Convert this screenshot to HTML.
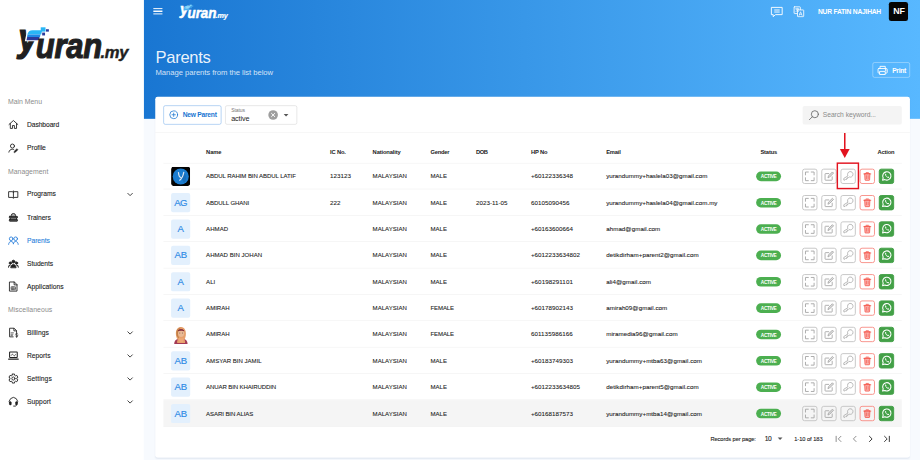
<!DOCTYPE html>
<html lang="en"><head><meta charset="utf-8"><title>Parents - yuran.my</title>
<style>
html,body{margin:0;padding:0;width:920px;height:460px;overflow:hidden;background:#fff}
#app{position:absolute;left:0;top:0;width:1920px;height:960px;transform:scale(0.479167);transform-origin:0 0;font-family:"Liberation Sans",sans-serif;background:#f7fafe;overflow:hidden;color:#222}
#app *{box-sizing:border-box}
.abs{position:absolute}
.t{position:absolute;white-space:nowrap;line-height:1}
.lg{font-style:italic;font-weight:700}
#side{position:absolute;left:0;top:0;width:300px;height:960px;background:#fff}
#hero{position:absolute;left:300px;top:0;width:1620px;height:248px;background:linear-gradient(90deg,#1976d2 0%,#3897e8 49%,#58b8ff 100%)}
#card{position:absolute;left:324px;top:202px;width:1575px;height:753px;background:#fff;border-radius:5px;box-shadow:0 1px 3px rgba(60,90,140,.10)}
.hline{position:absolute;height:1px;background:#ececec}
.row{position:absolute;left:341px;width:1541px;height:55px;border-bottom:1px solid #ededed}
.av{position:absolute;left:357px;width:40px;height:40px;border-radius:4px;background:#e3f0fd;overflow:hidden}
.chip{position:absolute;left:1578px;width:52px;height:20px;border-radius:10px;background:#4caf50}
.ab{position:absolute;width:32px;height:32px;border-radius:5px;border:2px solid #c6c6c6;color:#a6a6a6;display:flex;align-items:center;justify-content:center}
.ab.red{border-color:#f8928b;color:#f44336}
.ab.grn{border-color:#43a047;background:#43a047;color:#fff}
</style></head>
<body>
<div id="app">
<div id="hero"></div>
<div class="abs" style="left:319.5px;top:16.8px;width:19.6px;height:14px"><div class="abs" style="left:0;top:0;width:100%;height:2.3px;background:#fff"></div><div class="abs" style="left:0;top:5.6px;width:100%;height:2.3px;background:#fff"></div><div class="abs" style="left:0;top:11.2px;width:100%;height:2.3px;background:#fff"></div></div>
<div class="abs" style="left:358.6px;top:-15.1px;width:300px;height:150px;transform:scale(0.434);transform-origin:0 0"><div class="abs" style="left:0;top:0"><span class="t lg" style="z-index:1;left:38px;top:39.4px;font-size:79px;color:#fff;-webkit-text-stroke:2.6px #fff;transform:scaleX(.93);transform-origin:0 0">y</span><span class="t lg" style="z-index:3;left:74.5px;top:67.9px;font-size:64.5px;letter-spacing:-.3px;color:#fff;-webkit-text-stroke:2.2px #fff;transform:scaleY(1.135);transform-origin:0 84.65%">uran</span><span class="t lg" style="z-index:3;left:209.5px;top:93.2px;font-size:34.6px;letter-spacing:-.4px;color:#fff;-webkit-text-stroke:.9px #fff">.my</span></div>
<div class="abs" style="z-index:2;left:55px;top:56px;width:34px;height:30px;background:rgba(0,0,0,0);transform:skewX(-12deg)"></div>
<div class="abs" style="z-index:2;left:58px;top:62.8px;width:29px;height:9.2px;background:#7fd4fb;border-radius:9px 0 0 0;transform:skewX(-12deg)"></div>
<div class="abs" style="z-index:2;left:57px;top:72px;width:27px;height:4.6px;background:#5bc0f8;transform:skewX(-12deg)"></div>
<div class="abs" style="z-index:2;left:56px;top:76.6px;width:25.5px;height:6.6px;background:#4ab0ee;transform:skewX(-12deg)"></div>
<div class="abs" style="z-index:2;left:84.7px;top:57px;width:10px;height:9px;background:#7fd4fb"></div>
<div class="abs" style="z-index:2;left:96px;top:61px;width:6px;height:5px;background:#4ab0ee"></div>
<div class="abs" style="z-index:2;left:87.6px;top:67.8px;width:6.3px;height:6.1px;background:#4ab0ee"></div></div>
<div class="abs" style="left:1606.5px;top:9.5px;color:#fff"><svg width="29" height="29" viewBox="0 0 24 24" fill="none" stroke="currentColor" stroke-width="1.6" stroke-linecap="round" stroke-linejoin="round" style="display:block;"><path d="M3 4.5h18v12.5H9.5L5.5 20.5V17H3z"/><path d="M8 9h8M8 12.5h8"/></svg></div>
<div class="abs" style="left:1654px;top:10.5px;color:#fff"><svg width="26" height="26" viewBox="0 0 24 24" fill="none" stroke="currentColor" stroke-width="1.6" stroke-linecap="round" stroke-linejoin="round" style="display:block;"><rect x="3" y="3" width="12" height="13" rx="1"/><rect x="9.5" y="9" width="12" height="13" rx="1" fill="#4aa8f5"/><path d="M6 7h6M9 5.5V7M7 7c.5 2.5 2.5 4.5 4.5 5M11 7c-.5 2.5-2.5 4.5-4.5 5" stroke-width="1.2"/><path d="M12.7 19.5l2.8-7 2.8 7M13.7 17.3h3.6" stroke-width="1.3"/></svg></div>
<div class="t" style="top:17.27px;font-size:14px;letter-spacing:-0.474px;color:#fff;left:1706.92px;font-weight:700;">NUR FATIN NAJIHAH</div>
<div class="abs" style="left:1855px;top:4px;width:40px;height:40px;border-radius:5px;background:#050505"></div>
<div class="t" style="top:13.52px;font-size:18.5px;letter-spacing:-0.435px;color:#fff;left:1864.07px;font-weight:700;">NF</div>
<div class="t" style="top:102.28px;font-size:34.5px;letter-spacing:-0.588px;color:rgba(255,255,255,.92);left:324.52px;">Parents</div>
<div class="t" style="top:143.07px;font-size:16px;letter-spacing:-0.112px;color:rgba(255,255,255,.8);left:324.52px;">Manage parents from the list below</div>
<div class="abs" style="left:1821px;top:130px;width:78px;height:32px;border:1.5px solid rgba(255,255,255,.72);border-radius:4px"></div>
<div class="abs" style="left:1829.5px;top:134.5px;color:#fff"><svg width="24" height="24" viewBox="0 0 24 24" fill="none" stroke="currentColor" stroke-width="1.9" stroke-linecap="round" stroke-linejoin="round" style="display:block;"><path d="M6.5 8V3.5h11V8"/><rect x="2.5" y="8" width="19" height="9.5" rx="1.5"/><rect x="6.5" y="14" width="11" height="6.5" fill="#58b7fd"/><circle cx="18" cy="11" r=".7" fill="currentColor"/></svg></div>
<div class="t" style="top:140.4px;font-size:14px;letter-spacing:-0.618px;color:#fff;left:1861.98px;font-weight:700;">Print</div>
<div id="card"></div>
<div class="abs" style="left:341px;top:220px;width:121px;height:40px;border:1.8px solid #6aa7e7;border-radius:4px;background:#fff"></div>
<div class="abs" style="left:351.5px;top:229px;color:#1976d2"><svg width="21" height="21" viewBox="0 0 24 24" fill="none" stroke="currentColor" stroke-width="1.8" stroke-linecap="round" stroke-linejoin="round" style="display:block;"><circle cx="12" cy="12" r="9.3"/><path d="M8 12h8M12 8v8"/></svg></div>
<div class="t" style="top:232.22px;font-size:14px;letter-spacing:-0.571px;color:#1976d2;left:381.5px;font-weight:700;">New Parent</div>
<div class="abs" style="left:470px;top:220px;width:150px;height:40px;border:1.5px solid #cfcfcf;border-radius:4px;background:#fff"></div>
<div class="t" style="top:224.54px;font-size:10.5px;letter-spacing:-0.231px;color:#777;left:482.5px;">Status</div>
<div class="t" style="top:239.57px;font-size:15px;letter-spacing:-0.235px;color:#222;left:482.5px;">active</div>
<div class="abs" style="left:560px;top:229.5px;width:20px;height:20px;border-radius:50%;background:#9e9e9e"></div>
<div class="abs" style="left:560px;top:229.5px"><svg width="20" height="20" viewBox="0 0 24 24" fill="none" stroke="#fff" stroke-width="2.4" stroke-linecap="round" stroke-linejoin="round" ><path d="M8 8l8 8M16 8l-8 8"/></svg></div>
<div class="abs" style="left:591.5px;top:237.5px;width:0;height:0;border-left:5px solid transparent;border-right:5px solid transparent;border-top:5.5px solid #555"></div>
<div class="abs" style="left:1675px;top:220.5px;width:207px;height:39px;border-radius:4px;background:#f4f4f4"></div>
<div class="abs" style="left:1685.5px;top:226.5px;color:#666"><svg width="26" height="26" viewBox="0 0 24 24" fill="none" stroke="currentColor" stroke-width="1.6" stroke-linecap="round" stroke-linejoin="round" style="display:block;"><circle cx="13.5" cy="10.5" r="6.8"/><path d="M8.7 15.3L3 21"/></svg></div>
<div class="t" style="top:232.22px;font-size:14px;letter-spacing:-0.085px;color:#8b8b8b;left:1717.15px;">Search keyword...</div>
<div class="hline" style="left:324px;top:276px;width:1575px;background:#efefef"></div>
<div class="t" style="top:311.44px;font-size:12px;letter-spacing:-0.23px;color:#222;left:430.12px;font-weight:700;">Name</div>
<div class="t" style="top:311.44px;font-size:12px;letter-spacing:-0.267px;color:#222;left:688.7px;font-weight:700;">IC No.</div>
<div class="t" style="top:311.44px;font-size:12px;letter-spacing:-0.258px;color:#222;left:777.6px;font-weight:700;">Nationality</div>
<div class="t" style="top:311.44px;font-size:12px;letter-spacing:-0.499px;color:#222;left:898.43px;font-weight:700;">Gender</div>
<div class="t" style="top:311.44px;font-size:12px;letter-spacing:-0.979px;color:#222;left:993.6px;font-weight:700;">DOB</div>
<div class="t" style="top:311.44px;font-size:12px;letter-spacing:-0.314px;color:#222;left:1107.96px;font-weight:700;">HP No</div>
<div class="t" style="top:311.44px;font-size:12px;letter-spacing:-0.42px;color:#222;left:1265.11px;font-weight:700;">Email</div>
<div class="t" style="top:311.44px;font-size:12px;letter-spacing:-0.31px;color:#222;left:1586.92px;font-weight:700;">Status</div>
<div class="t" style="top:311.44px;font-size:12px;letter-spacing:-0.38px;color:#222;left:1831.51px;font-weight:700;">Action</div>
<div class="hline" style="left:341px;top:339.5px;width:1541px"></div>
<div class="row" style="top:340px"></div>
<div class="av" style="top:347.5px;background:none"><svg width="40" height="40" viewBox="0 0 40 40" style="display:block"><rect width="40" height="40" rx="4.5" fill="#030303"/><circle cx="20.2" cy="20.4" r="16.8" fill="#1b7ccf"/><path d="M20 20l9 -6a16.8 16.8 0 0 1 -2 20z" fill="#1668b3" opacity=".7"/><path d="M15.5 12.5c.6 5.5 1.2 9 4.5 9.5M26.5 11.5c-1.2 7-3.5 13-8.5 16.5" stroke="#dbe8f4" stroke-width="2.6" fill="none" stroke-linecap="round"/></svg></div>
<div class="t" style="top:361.23px;font-size:12.6px;letter-spacing:-0.152px;color:#222;left:430.12px;-webkit-text-stroke:0.18px #222;">ABDUL RAHIM BIN ABDUL LATIF</div>
<div class="t" style="top:360.53px;font-size:13px;letter-spacing:0.076px;color:#222;left:688.7px;-webkit-text-stroke:0.18px #222;">123123</div>
<div class="t" style="top:361.23px;font-size:12.6px;letter-spacing:0.07px;color:#222;left:777.6px;-webkit-text-stroke:0.18px #222;">MALAYSIAN</div>
<div class="t" style="top:361.23px;font-size:12.6px;letter-spacing:0.01px;color:#222;left:898.43px;-webkit-text-stroke:0.18px #222;">MALE</div>
<div class="t" style="top:360.53px;font-size:13px;letter-spacing:0.052px;color:#222;left:1107.96px;-webkit-text-stroke:0.18px #222;">+60122336348</div>
<div class="t" style="top:360.53px;font-size:13px;letter-spacing:0.013px;color:#222;left:1265.11px;-webkit-text-stroke:0.18px #222;">yurandummy+haslela03@gmail.com</div>
<div class="chip" style="top:357.9px"></div>
<div class="t" style="top:363.03px;font-size:10px;letter-spacing:-0.678px;color:#fff;left:1587.7px;font-weight:700;">ACTIVE</div>
<div class="ab" style="left:1674px;top:351.9px"><svg width="24" height="24" viewBox="0 0 24 24" fill="none" stroke="currentColor" stroke-width="1.9" stroke-linecap="round" stroke-linejoin="round" style="display:block;"><path d="M3 9V3h6M15 3h6v6M21 15v6h-6M9 21H3v-6"/></svg></div>
<div class="ab" style="left:1714px;top:351.9px"><svg width="23" height="23" viewBox="0 0 24 24" fill="none" stroke="currentColor" stroke-width="1.9" stroke-linecap="round" stroke-linejoin="round" style="display:block;"><path d="M18.5 13.5V20a1 1 0 0 1-1 1H4a1 1 0 0 1-1-1V7.5a1 1 0 0 1 1-1h7"/><path d="M9.5 15l1-3.5L19 3l2.5 2.5L13 14z" fill="currentColor" fill-opacity=".35"/></svg></div>
<div class="ab" style="left:1754px;top:351.9px"><svg width="24" height="24" viewBox="0 0 24 24" fill="none" stroke="currentColor" stroke-width="1.6" stroke-linecap="round" stroke-linejoin="round" style="display:block;"><path d="M11.2 10.4A5.8 5.8 0 1 1 14.1 13.2L12.8 14.5h-2v2h-2v2h-2l-1.3 1.3H3v-2.7z"/></svg></div>
<div class="ab red" style="left:1794px;top:351.9px"><svg width="22" height="22" viewBox="0 0 24 24" fill="none" stroke="currentColor" stroke-width="1.6" stroke-linecap="round" stroke-linejoin="round" style="display:block;"><path d="M4 6.5h16M9.5 3.5h5"/><path d="M6 6.5l.800 13.5a1 1 0 0 0 1 1h8.4a1 1 0 0 0 1-1l.800-13.5z" fill="currentColor" fill-opacity=".38"/><path d="M10 10.5v6.5M14 10.5v6.5" stroke-width="1.3"/></svg></div>
<div class="ab grn" style="left:1834px;top:351.9px"><svg width="23" height="23" viewBox="0 0 24 24" fill="none" stroke="currentColor" stroke-width="2.3" stroke-linecap="round" stroke-linejoin="round" style="display:block;"><path d="M3 21l1.35-5A9 9 0 1 1 8.1 19.66z"/><path d="M8.7 7.5c.4-.7 1.4-.8 1.7-.1l.8 1.7c.1.3.1.6-.1.9l-.6.7c.6 1.3 1.7 2.4 3.1 3.1l.8-.6c.3-.2.6-.2.9-.1l1.6.8c.7.3.6 1.3-.1 1.7-1.4.8-3.5.2-5.6-1.9s-3-4.6-2.5-6.2z" fill="currentColor" stroke="none"/></svg></div>
<div class="row" style="top:395px"></div>
<div class="av" style="top:402.5px"></div>
<div class="t" style="top:412.96px;font-size:20px;letter-spacing:-1.167px;color:#2f8be6;left:363.72px;-webkit-text-stroke:0.35px #2f8be6;">AG</div>
<div class="t" style="top:417.58px;font-size:12.6px;letter-spacing:-0.173px;color:#222;left:430.12px;-webkit-text-stroke:0.18px #222;">ABDULL GHANI</div>
<div class="t" style="top:416.88px;font-size:13px;letter-spacing:0.076px;color:#222;left:688.7px;-webkit-text-stroke:0.18px #222;">222</div>
<div class="t" style="top:417.58px;font-size:12.6px;letter-spacing:0.07px;color:#222;left:777.6px;-webkit-text-stroke:0.18px #222;">MALAYSIAN</div>
<div class="t" style="top:417.58px;font-size:12.6px;letter-spacing:0.01px;color:#222;left:898.43px;-webkit-text-stroke:0.18px #222;">MALE</div>
<div class="t" style="top:416.88px;font-size:13px;letter-spacing:0.01px;color:#222;left:993.6px;-webkit-text-stroke:0.18px #222;">2023-11-05</div>
<div class="t" style="top:416.88px;font-size:13px;letter-spacing:0.076px;color:#222;left:1107.96px;-webkit-text-stroke:0.18px #222;">60105090456</div>
<div class="t" style="top:416.88px;font-size:13px;letter-spacing:0.013px;color:#222;left:1265.11px;-webkit-text-stroke:0.18px #222;">yurandummy+haslela04@gmail.com.my</div>
<div class="chip" style="top:412.9px"></div>
<div class="t" style="top:419.38px;font-size:10px;letter-spacing:-0.678px;color:#fff;left:1587.7px;font-weight:700;">ACTIVE</div>
<div class="ab" style="left:1674px;top:406.9px"><svg width="24" height="24" viewBox="0 0 24 24" fill="none" stroke="currentColor" stroke-width="1.9" stroke-linecap="round" stroke-linejoin="round" style="display:block;"><path d="M3 9V3h6M15 3h6v6M21 15v6h-6M9 21H3v-6"/></svg></div>
<div class="ab" style="left:1714px;top:406.9px"><svg width="23" height="23" viewBox="0 0 24 24" fill="none" stroke="currentColor" stroke-width="1.9" stroke-linecap="round" stroke-linejoin="round" style="display:block;"><path d="M18.5 13.5V20a1 1 0 0 1-1 1H4a1 1 0 0 1-1-1V7.5a1 1 0 0 1 1-1h7"/><path d="M9.5 15l1-3.5L19 3l2.5 2.5L13 14z" fill="currentColor" fill-opacity=".35"/></svg></div>
<div class="ab" style="left:1754px;top:406.9px"><svg width="24" height="24" viewBox="0 0 24 24" fill="none" stroke="currentColor" stroke-width="1.6" stroke-linecap="round" stroke-linejoin="round" style="display:block;"><path d="M11.2 10.4A5.8 5.8 0 1 1 14.1 13.2L12.8 14.5h-2v2h-2v2h-2l-1.3 1.3H3v-2.7z"/></svg></div>
<div class="ab red" style="left:1794px;top:406.9px"><svg width="22" height="22" viewBox="0 0 24 24" fill="none" stroke="currentColor" stroke-width="1.6" stroke-linecap="round" stroke-linejoin="round" style="display:block;"><path d="M4 6.5h16M9.5 3.5h5"/><path d="M6 6.5l.800 13.5a1 1 0 0 0 1 1h8.4a1 1 0 0 0 1-1l.800-13.5z" fill="currentColor" fill-opacity=".38"/><path d="M10 10.5v6.5M14 10.5v6.5" stroke-width="1.3"/></svg></div>
<div class="ab grn" style="left:1834px;top:406.9px"><svg width="23" height="23" viewBox="0 0 24 24" fill="none" stroke="currentColor" stroke-width="2.3" stroke-linecap="round" stroke-linejoin="round" style="display:block;"><path d="M3 21l1.35-5A9 9 0 1 1 8.1 19.66z"/><path d="M8.7 7.5c.4-.7 1.4-.8 1.7-.1l.8 1.7c.1.3.1.6-.1.9l-.6.7c.6 1.3 1.7 2.4 3.1 3.1l.8-.6c.3-.2.6-.2.9-.1l1.6.8c.7.3.6 1.3-.1 1.7-1.4.8-3.5.2-5.6-1.9s-3-4.6-2.5-6.2z" fill="currentColor" stroke="none"/></svg></div>
<div class="row" style="top:450px"></div>
<div class="av" style="top:457.5px"></div>
<div class="t" style="top:467.22px;font-size:20px;letter-spacing:-0.293px;color:#2f8be6;left:370.48px;-webkit-text-stroke:0.35px #2f8be6;">A</div>
<div class="t" style="top:471.84px;font-size:12.6px;letter-spacing:0.15px;color:#222;left:430.12px;-webkit-text-stroke:0.18px #222;">AHMAD</div>
<div class="t" style="top:471.84px;font-size:12.6px;letter-spacing:0.07px;color:#222;left:777.6px;-webkit-text-stroke:0.18px #222;">MALAYSIAN</div>
<div class="t" style="top:471.84px;font-size:12.6px;letter-spacing:0.01px;color:#222;left:898.43px;-webkit-text-stroke:0.18px #222;">MALE</div>
<div class="t" style="top:471.14px;font-size:13px;letter-spacing:0.052px;color:#222;left:1107.96px;-webkit-text-stroke:0.18px #222;">+60163600664</div>
<div class="t" style="top:471.14px;font-size:13px;letter-spacing:0.044px;color:#222;left:1265.11px;-webkit-text-stroke:0.18px #222;">ahmad@gmail.com</div>
<div class="chip" style="top:467.9px"></div>
<div class="t" style="top:473.64px;font-size:10px;letter-spacing:-0.678px;color:#fff;left:1587.7px;font-weight:700;">ACTIVE</div>
<div class="ab" style="left:1674px;top:461.9px"><svg width="24" height="24" viewBox="0 0 24 24" fill="none" stroke="currentColor" stroke-width="1.9" stroke-linecap="round" stroke-linejoin="round" style="display:block;"><path d="M3 9V3h6M15 3h6v6M21 15v6h-6M9 21H3v-6"/></svg></div>
<div class="ab" style="left:1714px;top:461.9px"><svg width="23" height="23" viewBox="0 0 24 24" fill="none" stroke="currentColor" stroke-width="1.9" stroke-linecap="round" stroke-linejoin="round" style="display:block;"><path d="M18.5 13.5V20a1 1 0 0 1-1 1H4a1 1 0 0 1-1-1V7.5a1 1 0 0 1 1-1h7"/><path d="M9.5 15l1-3.5L19 3l2.5 2.5L13 14z" fill="currentColor" fill-opacity=".35"/></svg></div>
<div class="ab" style="left:1754px;top:461.9px"><svg width="24" height="24" viewBox="0 0 24 24" fill="none" stroke="currentColor" stroke-width="1.6" stroke-linecap="round" stroke-linejoin="round" style="display:block;"><path d="M11.2 10.4A5.8 5.8 0 1 1 14.1 13.2L12.8 14.5h-2v2h-2v2h-2l-1.3 1.3H3v-2.7z"/></svg></div>
<div class="ab red" style="left:1794px;top:461.9px"><svg width="22" height="22" viewBox="0 0 24 24" fill="none" stroke="currentColor" stroke-width="1.6" stroke-linecap="round" stroke-linejoin="round" style="display:block;"><path d="M4 6.5h16M9.5 3.5h5"/><path d="M6 6.5l.800 13.5a1 1 0 0 0 1 1h8.4a1 1 0 0 0 1-1l.800-13.5z" fill="currentColor" fill-opacity=".38"/><path d="M10 10.5v6.5M14 10.5v6.5" stroke-width="1.3"/></svg></div>
<div class="ab grn" style="left:1834px;top:461.9px"><svg width="23" height="23" viewBox="0 0 24 24" fill="none" stroke="currentColor" stroke-width="2.3" stroke-linecap="round" stroke-linejoin="round" style="display:block;"><path d="M3 21l1.35-5A9 9 0 1 1 8.1 19.66z"/><path d="M8.7 7.5c.4-.7 1.4-.8 1.7-.1l.8 1.7c.1.3.1.6-.1.9l-.6.7c.6 1.3 1.7 2.4 3.1 3.1l.8-.6c.3-.2.6-.2.9-.1l1.6.8c.7.3.6 1.3-.1 1.7-1.4.8-3.5.2-5.6-1.9s-3-4.6-2.5-6.2z" fill="currentColor" stroke="none"/></svg></div>
<div class="row" style="top:505px"></div>
<div class="av" style="top:512.5px"></div>
<div class="t" style="top:521.48px;font-size:20px;letter-spacing:-0.586px;color:#2f8be6;left:364.25px;-webkit-text-stroke:0.35px #2f8be6;">AB</div>
<div class="t" style="top:526.1px;font-size:12.6px;letter-spacing:0.046px;color:#222;left:430.12px;-webkit-text-stroke:0.18px #222;">AHMAD BIN JOHAN</div>
<div class="t" style="top:526.1px;font-size:12.6px;letter-spacing:0.07px;color:#222;left:777.6px;-webkit-text-stroke:0.18px #222;">MALAYSIAN</div>
<div class="t" style="top:526.1px;font-size:12.6px;letter-spacing:0.01px;color:#222;left:898.43px;-webkit-text-stroke:0.18px #222;">MALE</div>
<div class="t" style="top:525.4px;font-size:13px;letter-spacing:0.055px;color:#222;left:1107.96px;-webkit-text-stroke:0.18px #222;">+6012233634802</div>
<div class="t" style="top:525.4px;font-size:13px;letter-spacing:0.062px;color:#222;left:1265.11px;-webkit-text-stroke:0.18px #222;">detikdirham+parent2@gmail.com</div>
<div class="chip" style="top:522.9px"></div>
<div class="t" style="top:527.9px;font-size:10px;letter-spacing:-0.678px;color:#fff;left:1587.7px;font-weight:700;">ACTIVE</div>
<div class="ab" style="left:1674px;top:516.9px"><svg width="24" height="24" viewBox="0 0 24 24" fill="none" stroke="currentColor" stroke-width="1.9" stroke-linecap="round" stroke-linejoin="round" style="display:block;"><path d="M3 9V3h6M15 3h6v6M21 15v6h-6M9 21H3v-6"/></svg></div>
<div class="ab" style="left:1714px;top:516.9px"><svg width="23" height="23" viewBox="0 0 24 24" fill="none" stroke="currentColor" stroke-width="1.9" stroke-linecap="round" stroke-linejoin="round" style="display:block;"><path d="M18.5 13.5V20a1 1 0 0 1-1 1H4a1 1 0 0 1-1-1V7.5a1 1 0 0 1 1-1h7"/><path d="M9.5 15l1-3.5L19 3l2.5 2.5L13 14z" fill="currentColor" fill-opacity=".35"/></svg></div>
<div class="ab" style="left:1754px;top:516.9px"><svg width="24" height="24" viewBox="0 0 24 24" fill="none" stroke="currentColor" stroke-width="1.6" stroke-linecap="round" stroke-linejoin="round" style="display:block;"><path d="M11.2 10.4A5.8 5.8 0 1 1 14.1 13.2L12.8 14.5h-2v2h-2v2h-2l-1.3 1.3H3v-2.7z"/></svg></div>
<div class="ab red" style="left:1794px;top:516.9px"><svg width="22" height="22" viewBox="0 0 24 24" fill="none" stroke="currentColor" stroke-width="1.6" stroke-linecap="round" stroke-linejoin="round" style="display:block;"><path d="M4 6.5h16M9.5 3.5h5"/><path d="M6 6.5l.800 13.5a1 1 0 0 0 1 1h8.4a1 1 0 0 0 1-1l.800-13.5z" fill="currentColor" fill-opacity=".38"/><path d="M10 10.5v6.5M14 10.5v6.5" stroke-width="1.3"/></svg></div>
<div class="ab grn" style="left:1834px;top:516.9px"><svg width="23" height="23" viewBox="0 0 24 24" fill="none" stroke="currentColor" stroke-width="2.3" stroke-linecap="round" stroke-linejoin="round" style="display:block;"><path d="M3 21l1.35-5A9 9 0 1 1 8.1 19.66z"/><path d="M8.7 7.5c.4-.7 1.4-.8 1.7-.1l.8 1.7c.1.3.1.6-.1.9l-.6.7c.6 1.3 1.7 2.4 3.1 3.1l.8-.6c.3-.2.6-.2.9-.1l1.6.8c.7.3.6 1.3-.1 1.7-1.4.8-3.5.2-5.6-1.9s-3-4.6-2.5-6.2z" fill="currentColor" stroke="none"/></svg></div>
<div class="row" style="top:560px"></div>
<div class="av" style="top:567.5px"></div>
<div class="t" style="top:577.83px;font-size:20px;letter-spacing:-0.293px;color:#2f8be6;left:370.48px;-webkit-text-stroke:0.35px #2f8be6;">A</div>
<div class="t" style="top:582.45px;font-size:12.6px;letter-spacing:0.038px;color:#222;left:430.12px;-webkit-text-stroke:0.18px #222;">ALI</div>
<div class="t" style="top:582.45px;font-size:12.6px;letter-spacing:0.07px;color:#222;left:777.6px;-webkit-text-stroke:0.18px #222;">MALAYSIAN</div>
<div class="t" style="top:582.45px;font-size:12.6px;letter-spacing:0.01px;color:#222;left:898.43px;-webkit-text-stroke:0.18px #222;">MALE</div>
<div class="t" style="top:581.75px;font-size:13px;letter-spacing:0.132px;color:#222;left:1107.96px;-webkit-text-stroke:0.18px #222;">+60198291101</div>
<div class="t" style="top:581.75px;font-size:13px;letter-spacing:0.06px;color:#222;left:1265.11px;-webkit-text-stroke:0.18px #222;">ali4@gmail.com</div>
<div class="chip" style="top:577.9px"></div>
<div class="t" style="top:584.25px;font-size:10px;letter-spacing:-0.678px;color:#fff;left:1587.7px;font-weight:700;">ACTIVE</div>
<div class="ab" style="left:1674px;top:571.9px"><svg width="24" height="24" viewBox="0 0 24 24" fill="none" stroke="currentColor" stroke-width="1.9" stroke-linecap="round" stroke-linejoin="round" style="display:block;"><path d="M3 9V3h6M15 3h6v6M21 15v6h-6M9 21H3v-6"/></svg></div>
<div class="ab" style="left:1714px;top:571.9px"><svg width="23" height="23" viewBox="0 0 24 24" fill="none" stroke="currentColor" stroke-width="1.9" stroke-linecap="round" stroke-linejoin="round" style="display:block;"><path d="M18.5 13.5V20a1 1 0 0 1-1 1H4a1 1 0 0 1-1-1V7.5a1 1 0 0 1 1-1h7"/><path d="M9.5 15l1-3.5L19 3l2.5 2.5L13 14z" fill="currentColor" fill-opacity=".35"/></svg></div>
<div class="ab" style="left:1754px;top:571.9px"><svg width="24" height="24" viewBox="0 0 24 24" fill="none" stroke="currentColor" stroke-width="1.6" stroke-linecap="round" stroke-linejoin="round" style="display:block;"><path d="M11.2 10.4A5.8 5.8 0 1 1 14.1 13.2L12.8 14.5h-2v2h-2v2h-2l-1.3 1.3H3v-2.7z"/></svg></div>
<div class="ab red" style="left:1794px;top:571.9px"><svg width="22" height="22" viewBox="0 0 24 24" fill="none" stroke="currentColor" stroke-width="1.6" stroke-linecap="round" stroke-linejoin="round" style="display:block;"><path d="M4 6.5h16M9.5 3.5h5"/><path d="M6 6.5l.800 13.5a1 1 0 0 0 1 1h8.4a1 1 0 0 0 1-1l.800-13.5z" fill="currentColor" fill-opacity=".38"/><path d="M10 10.5v6.5M14 10.5v6.5" stroke-width="1.3"/></svg></div>
<div class="ab grn" style="left:1834px;top:571.9px"><svg width="23" height="23" viewBox="0 0 24 24" fill="none" stroke="currentColor" stroke-width="2.3" stroke-linecap="round" stroke-linejoin="round" style="display:block;"><path d="M3 21l1.35-5A9 9 0 1 1 8.1 19.66z"/><path d="M8.7 7.5c.4-.7 1.4-.8 1.7-.1l.8 1.7c.1.3.1.6-.1.9l-.6.7c.6 1.3 1.7 2.4 3.1 3.1l.8-.6c.3-.2.6-.2.9-.1l1.6.8c.7.3.6 1.3-.1 1.7-1.4.8-3.5.2-5.6-1.9s-3-4.6-2.5-6.2z" fill="currentColor" stroke="none"/></svg></div>
<div class="row" style="top:615px"></div>
<div class="av" style="top:622.5px"></div>
<div class="t" style="top:632.09px;font-size:20px;letter-spacing:-0.293px;color:#2f8be6;left:370.48px;-webkit-text-stroke:0.35px #2f8be6;">A</div>
<div class="t" style="top:636.71px;font-size:12.6px;letter-spacing:0.025px;color:#222;left:430.12px;-webkit-text-stroke:0.18px #222;">AMIRAH</div>
<div class="t" style="top:636.71px;font-size:12.6px;letter-spacing:0.07px;color:#222;left:777.6px;-webkit-text-stroke:0.18px #222;">MALAYSIAN</div>
<div class="t" style="top:636.71px;font-size:12.6px;letter-spacing:-0.246px;color:#222;left:898.43px;-webkit-text-stroke:0.18px #222;">FEMALE</div>
<div class="t" style="top:636.01px;font-size:13px;letter-spacing:0.052px;color:#222;left:1107.96px;-webkit-text-stroke:0.18px #222;">+60178902143</div>
<div class="t" style="top:636.01px;font-size:13px;letter-spacing:0.045px;color:#222;left:1265.11px;-webkit-text-stroke:0.18px #222;">amirah09@gmail.com</div>
<div class="chip" style="top:632.9px"></div>
<div class="t" style="top:638.51px;font-size:10px;letter-spacing:-0.678px;color:#fff;left:1587.7px;font-weight:700;">ACTIVE</div>
<div class="ab" style="left:1674px;top:626.9px"><svg width="24" height="24" viewBox="0 0 24 24" fill="none" stroke="currentColor" stroke-width="1.9" stroke-linecap="round" stroke-linejoin="round" style="display:block;"><path d="M3 9V3h6M15 3h6v6M21 15v6h-6M9 21H3v-6"/></svg></div>
<div class="ab" style="left:1714px;top:626.9px"><svg width="23" height="23" viewBox="0 0 24 24" fill="none" stroke="currentColor" stroke-width="1.9" stroke-linecap="round" stroke-linejoin="round" style="display:block;"><path d="M18.5 13.5V20a1 1 0 0 1-1 1H4a1 1 0 0 1-1-1V7.5a1 1 0 0 1 1-1h7"/><path d="M9.5 15l1-3.5L19 3l2.5 2.5L13 14z" fill="currentColor" fill-opacity=".35"/></svg></div>
<div class="ab" style="left:1754px;top:626.9px"><svg width="24" height="24" viewBox="0 0 24 24" fill="none" stroke="currentColor" stroke-width="1.6" stroke-linecap="round" stroke-linejoin="round" style="display:block;"><path d="M11.2 10.4A5.8 5.8 0 1 1 14.1 13.2L12.8 14.5h-2v2h-2v2h-2l-1.3 1.3H3v-2.7z"/></svg></div>
<div class="ab red" style="left:1794px;top:626.9px"><svg width="22" height="22" viewBox="0 0 24 24" fill="none" stroke="currentColor" stroke-width="1.6" stroke-linecap="round" stroke-linejoin="round" style="display:block;"><path d="M4 6.5h16M9.5 3.5h5"/><path d="M6 6.5l.800 13.5a1 1 0 0 0 1 1h8.4a1 1 0 0 0 1-1l.800-13.5z" fill="currentColor" fill-opacity=".38"/><path d="M10 10.5v6.5M14 10.5v6.5" stroke-width="1.3"/></svg></div>
<div class="ab grn" style="left:1834px;top:626.9px"><svg width="23" height="23" viewBox="0 0 24 24" fill="none" stroke="currentColor" stroke-width="2.3" stroke-linecap="round" stroke-linejoin="round" style="display:block;"><path d="M3 21l1.35-5A9 9 0 1 1 8.1 19.66z"/><path d="M8.7 7.5c.4-.7 1.4-.8 1.7-.1l.8 1.7c.1.3.1.6-.1.9l-.6.7c.6 1.3 1.7 2.4 3.1 3.1l.8-.6c.3-.2.6-.2.9-.1l1.6.8c.7.3.6 1.3-.1 1.7-1.4.8-3.5.2-5.6-1.9s-3-4.6-2.5-6.2z" fill="currentColor" stroke="none"/></svg></div>
<div class="row" style="top:670px"></div>
<div class="av" style="top:677.5px;background:none"><svg width="40" height="40" viewBox="0 0 40 40" style="display:block"><rect width="40" height="40" fill="#fff"/><path d="M6.5 40c.3-6 3-9.5 8-10.5h12c5 1 7.7 4.5 8 10.5z" fill="#a33a55"/><path d="M10 18c0-8.5 4.3-13.5 10.5-13.5S31 9.5 31 18c0 6-1.5 10-3 12.5 1 2.5 2 5 1 7.5H13c-1-2.5 0-5 1-7.5-2.5-2.5-4-6.5-4-12.5z" fill="#e6a06c"/><path d="M11 17c0-6 3.5-11 9.5-11-4 2-6 6-6 11s1 9 3.5 12c-4-1.5-7-5-7-12z" fill="#b9773f" opacity=".8"/><ellipse cx="21" cy="17.5" rx="6.3" ry="7.8" fill="#e9b994"/><path d="M14.8 12.5c1.5-3.5 10.5-3.5 12.4 0-2-1.6-10-1.6-12.4 0z" fill="#7d2435" stroke="#7d2435" stroke-width="1.6"/><circle cx="18.3" cy="17" r="1" fill="#4a3a36"/><circle cx="23.8" cy="17" r="1" fill="#4a3a36"/><path d="M17 27c2.5 2 6 2 8.5 0 1 2.5 1 6-1 9h-6c-2.5-3-2.5-6.5-1.5-9z" fill="#eda877"/></svg></div>
<div class="t" style="top:690.97px;font-size:12.6px;letter-spacing:0.025px;color:#222;left:430.12px;-webkit-text-stroke:0.18px #222;">AMIRAH</div>
<div class="t" style="top:690.97px;font-size:12.6px;letter-spacing:0.07px;color:#222;left:777.6px;-webkit-text-stroke:0.18px #222;">MALAYSIAN</div>
<div class="t" style="top:690.97px;font-size:12.6px;letter-spacing:-0.246px;color:#222;left:898.43px;-webkit-text-stroke:0.18px #222;">FEMALE</div>
<div class="t" style="top:690.27px;font-size:13px;letter-spacing:0.157px;color:#222;left:1107.96px;-webkit-text-stroke:0.18px #222;">601135986166</div>
<div class="t" style="top:690.27px;font-size:13px;letter-spacing:0.071px;color:#222;left:1265.11px;-webkit-text-stroke:0.18px #222;">miramedia96@gmail.com</div>
<div class="chip" style="top:687.9px"></div>
<div class="t" style="top:694.85px;font-size:10px;letter-spacing:-0.678px;color:#fff;left:1587.7px;font-weight:700;">ACTIVE</div>
<div class="ab" style="left:1674px;top:681.9px"><svg width="24" height="24" viewBox="0 0 24 24" fill="none" stroke="currentColor" stroke-width="1.9" stroke-linecap="round" stroke-linejoin="round" style="display:block;"><path d="M3 9V3h6M15 3h6v6M21 15v6h-6M9 21H3v-6"/></svg></div>
<div class="ab" style="left:1714px;top:681.9px"><svg width="23" height="23" viewBox="0 0 24 24" fill="none" stroke="currentColor" stroke-width="1.9" stroke-linecap="round" stroke-linejoin="round" style="display:block;"><path d="M18.5 13.5V20a1 1 0 0 1-1 1H4a1 1 0 0 1-1-1V7.5a1 1 0 0 1 1-1h7"/><path d="M9.5 15l1-3.5L19 3l2.5 2.5L13 14z" fill="currentColor" fill-opacity=".35"/></svg></div>
<div class="ab" style="left:1754px;top:681.9px"><svg width="24" height="24" viewBox="0 0 24 24" fill="none" stroke="currentColor" stroke-width="1.6" stroke-linecap="round" stroke-linejoin="round" style="display:block;"><path d="M11.2 10.4A5.8 5.8 0 1 1 14.1 13.2L12.8 14.5h-2v2h-2v2h-2l-1.3 1.3H3v-2.7z"/></svg></div>
<div class="ab red" style="left:1794px;top:681.9px"><svg width="22" height="22" viewBox="0 0 24 24" fill="none" stroke="currentColor" stroke-width="1.6" stroke-linecap="round" stroke-linejoin="round" style="display:block;"><path d="M4 6.5h16M9.5 3.5h5"/><path d="M6 6.5l.800 13.5a1 1 0 0 0 1 1h8.4a1 1 0 0 0 1-1l.800-13.5z" fill="currentColor" fill-opacity=".38"/><path d="M10 10.5v6.5M14 10.5v6.5" stroke-width="1.3"/></svg></div>
<div class="ab grn" style="left:1834px;top:681.9px"><svg width="23" height="23" viewBox="0 0 24 24" fill="none" stroke="currentColor" stroke-width="2.3" stroke-linecap="round" stroke-linejoin="round" style="display:block;"><path d="M3 21l1.35-5A9 9 0 1 1 8.1 19.66z"/><path d="M8.7 7.5c.4-.7 1.4-.8 1.7-.1l.8 1.7c.1.3.1.6-.1.9l-.6.7c.6 1.3 1.7 2.4 3.1 3.1l.8-.6c.3-.2.6-.2.9-.1l1.6.8c.7.3.6 1.3-.1 1.7-1.4.8-3.5.2-5.6-1.9s-3-4.6-2.5-6.2z" fill="currentColor" stroke="none"/></svg></div>
<div class="row" style="top:725px"></div>
<div class="av" style="top:732.5px"></div>
<div class="t" style="top:742.7px;font-size:20px;letter-spacing:-0.586px;color:#2f8be6;left:364.25px;-webkit-text-stroke:0.35px #2f8be6;">AB</div>
<div class="t" style="top:747.31px;font-size:12.6px;letter-spacing:0.005px;color:#222;left:430.12px;-webkit-text-stroke:0.18px #222;">AMSYAR BIN JAMIL</div>
<div class="t" style="top:747.31px;font-size:12.6px;letter-spacing:0.07px;color:#222;left:777.6px;-webkit-text-stroke:0.18px #222;">MALAYSIAN</div>
<div class="t" style="top:747.31px;font-size:12.6px;letter-spacing:0.01px;color:#222;left:898.43px;-webkit-text-stroke:0.18px #222;">MALE</div>
<div class="t" style="top:746.61px;font-size:13px;letter-spacing:0.052px;color:#222;left:1107.96px;-webkit-text-stroke:0.18px #222;">+60183749303</div>
<div class="t" style="top:746.61px;font-size:13px;letter-spacing:0.055px;color:#222;left:1265.11px;-webkit-text-stroke:0.18px #222;">yurandummy+mtba63@gmail.com</div>
<div class="chip" style="top:742.9px"></div>
<div class="t" style="top:749.11px;font-size:10px;letter-spacing:-0.678px;color:#fff;left:1587.7px;font-weight:700;">ACTIVE</div>
<div class="ab" style="left:1674px;top:736.9px"><svg width="24" height="24" viewBox="0 0 24 24" fill="none" stroke="currentColor" stroke-width="1.9" stroke-linecap="round" stroke-linejoin="round" style="display:block;"><path d="M3 9V3h6M15 3h6v6M21 15v6h-6M9 21H3v-6"/></svg></div>
<div class="ab" style="left:1714px;top:736.9px"><svg width="23" height="23" viewBox="0 0 24 24" fill="none" stroke="currentColor" stroke-width="1.9" stroke-linecap="round" stroke-linejoin="round" style="display:block;"><path d="M18.5 13.5V20a1 1 0 0 1-1 1H4a1 1 0 0 1-1-1V7.5a1 1 0 0 1 1-1h7"/><path d="M9.5 15l1-3.5L19 3l2.5 2.5L13 14z" fill="currentColor" fill-opacity=".35"/></svg></div>
<div class="ab" style="left:1754px;top:736.9px"><svg width="24" height="24" viewBox="0 0 24 24" fill="none" stroke="currentColor" stroke-width="1.6" stroke-linecap="round" stroke-linejoin="round" style="display:block;"><path d="M11.2 10.4A5.8 5.8 0 1 1 14.1 13.2L12.8 14.5h-2v2h-2v2h-2l-1.3 1.3H3v-2.7z"/></svg></div>
<div class="ab red" style="left:1794px;top:736.9px"><svg width="22" height="22" viewBox="0 0 24 24" fill="none" stroke="currentColor" stroke-width="1.6" stroke-linecap="round" stroke-linejoin="round" style="display:block;"><path d="M4 6.5h16M9.5 3.5h5"/><path d="M6 6.5l.800 13.5a1 1 0 0 0 1 1h8.4a1 1 0 0 0 1-1l.800-13.5z" fill="currentColor" fill-opacity=".38"/><path d="M10 10.5v6.5M14 10.5v6.5" stroke-width="1.3"/></svg></div>
<div class="ab grn" style="left:1834px;top:736.9px"><svg width="23" height="23" viewBox="0 0 24 24" fill="none" stroke="currentColor" stroke-width="2.3" stroke-linecap="round" stroke-linejoin="round" style="display:block;"><path d="M3 21l1.35-5A9 9 0 1 1 8.1 19.66z"/><path d="M8.7 7.5c.4-.7 1.4-.8 1.7-.1l.8 1.7c.1.3.1.6-.1.9l-.6.7c.6 1.3 1.7 2.4 3.1 3.1l.8-.6c.3-.2.6-.2.9-.1l1.6.8c.7.3.6 1.3-.1 1.7-1.4.8-3.5.2-5.6-1.9s-3-4.6-2.5-6.2z" fill="currentColor" stroke="none"/></svg></div>
<div class="row" style="top:780px"></div>
<div class="av" style="top:787.5px"></div>
<div class="t" style="top:796.96px;font-size:20px;letter-spacing:-0.586px;color:#2f8be6;left:364.25px;-webkit-text-stroke:0.35px #2f8be6;">AB</div>
<div class="t" style="top:801.58px;font-size:12.6px;letter-spacing:-0.234px;color:#222;left:430.12px;-webkit-text-stroke:0.18px #222;">ANUAR BIN KHAIRUDDIN</div>
<div class="t" style="top:801.58px;font-size:12.6px;letter-spacing:0.07px;color:#222;left:777.6px;-webkit-text-stroke:0.18px #222;">MALAYSIAN</div>
<div class="t" style="top:801.58px;font-size:12.6px;letter-spacing:0.01px;color:#222;left:898.43px;-webkit-text-stroke:0.18px #222;">MALE</div>
<div class="t" style="top:800.88px;font-size:13px;letter-spacing:0.055px;color:#222;left:1107.96px;-webkit-text-stroke:0.18px #222;">+6012233634805</div>
<div class="t" style="top:800.88px;font-size:13px;letter-spacing:0.062px;color:#222;left:1265.11px;-webkit-text-stroke:0.18px #222;">detikdirham+parent5@gmail.com</div>
<div class="chip" style="top:797.9px"></div>
<div class="t" style="top:803.38px;font-size:10px;letter-spacing:-0.678px;color:#fff;left:1587.7px;font-weight:700;">ACTIVE</div>
<div class="ab" style="left:1674px;top:791.9px"><svg width="24" height="24" viewBox="0 0 24 24" fill="none" stroke="currentColor" stroke-width="1.9" stroke-linecap="round" stroke-linejoin="round" style="display:block;"><path d="M3 9V3h6M15 3h6v6M21 15v6h-6M9 21H3v-6"/></svg></div>
<div class="ab" style="left:1714px;top:791.9px"><svg width="23" height="23" viewBox="0 0 24 24" fill="none" stroke="currentColor" stroke-width="1.9" stroke-linecap="round" stroke-linejoin="round" style="display:block;"><path d="M18.5 13.5V20a1 1 0 0 1-1 1H4a1 1 0 0 1-1-1V7.5a1 1 0 0 1 1-1h7"/><path d="M9.5 15l1-3.5L19 3l2.5 2.5L13 14z" fill="currentColor" fill-opacity=".35"/></svg></div>
<div class="ab" style="left:1754px;top:791.9px"><svg width="24" height="24" viewBox="0 0 24 24" fill="none" stroke="currentColor" stroke-width="1.6" stroke-linecap="round" stroke-linejoin="round" style="display:block;"><path d="M11.2 10.4A5.8 5.8 0 1 1 14.1 13.2L12.8 14.5h-2v2h-2v2h-2l-1.3 1.3H3v-2.7z"/></svg></div>
<div class="ab red" style="left:1794px;top:791.9px"><svg width="22" height="22" viewBox="0 0 24 24" fill="none" stroke="currentColor" stroke-width="1.6" stroke-linecap="round" stroke-linejoin="round" style="display:block;"><path d="M4 6.5h16M9.5 3.5h5"/><path d="M6 6.5l.800 13.5a1 1 0 0 0 1 1h8.4a1 1 0 0 0 1-1l.800-13.5z" fill="currentColor" fill-opacity=".38"/><path d="M10 10.5v6.5M14 10.5v6.5" stroke-width="1.3"/></svg></div>
<div class="ab grn" style="left:1834px;top:791.9px"><svg width="23" height="23" viewBox="0 0 24 24" fill="none" stroke="currentColor" stroke-width="2.3" stroke-linecap="round" stroke-linejoin="round" style="display:block;"><path d="M3 21l1.35-5A9 9 0 1 1 8.1 19.66z"/><path d="M8.7 7.5c.4-.7 1.4-.8 1.7-.1l.8 1.7c.1.3.1.6-.1.9l-.6.7c.6 1.3 1.7 2.4 3.1 3.1l.8-.6c.3-.2.6-.2.9-.1l1.6.8c.7.3.6 1.3-.1 1.7-1.4.8-3.5.2-5.6-1.9s-3-4.6-2.5-6.2z" fill="currentColor" stroke="none"/></svg></div>
<div class="row" style="top:835px;background:#f5f5f5"></div>
<div class="av" style="top:842.5px"></div>
<div class="t" style="top:853.31px;font-size:20px;letter-spacing:-0.586px;color:#2f8be6;left:364.25px;-webkit-text-stroke:0.35px #2f8be6;">AB</div>
<div class="t" style="top:857.92px;font-size:12.6px;letter-spacing:-0.171px;color:#222;left:430.12px;-webkit-text-stroke:0.18px #222;">ASARI BIN ALIAS</div>
<div class="t" style="top:857.92px;font-size:12.6px;letter-spacing:0.07px;color:#222;left:777.6px;-webkit-text-stroke:0.18px #222;">MALAYSIAN</div>
<div class="t" style="top:857.92px;font-size:12.6px;letter-spacing:0.01px;color:#222;left:898.43px;-webkit-text-stroke:0.18px #222;">MALE</div>
<div class="t" style="top:857.22px;font-size:13px;letter-spacing:0.052px;color:#222;left:1107.96px;-webkit-text-stroke:0.18px #222;">+60168187573</div>
<div class="t" style="top:857.22px;font-size:13px;letter-spacing:0.055px;color:#222;left:1265.11px;-webkit-text-stroke:0.18px #222;">yurandummy+mtba14@gmail.com</div>
<div class="chip" style="top:852.9px"></div>
<div class="t" style="top:859.72px;font-size:10px;letter-spacing:-0.678px;color:#fff;left:1587.7px;font-weight:700;">ACTIVE</div>
<div class="ab" style="left:1674px;top:846.9px"><svg width="24" height="24" viewBox="0 0 24 24" fill="none" stroke="currentColor" stroke-width="1.9" stroke-linecap="round" stroke-linejoin="round" style="display:block;"><path d="M3 9V3h6M15 3h6v6M21 15v6h-6M9 21H3v-6"/></svg></div>
<div class="ab" style="left:1714px;top:846.9px"><svg width="23" height="23" viewBox="0 0 24 24" fill="none" stroke="currentColor" stroke-width="1.9" stroke-linecap="round" stroke-linejoin="round" style="display:block;"><path d="M18.5 13.5V20a1 1 0 0 1-1 1H4a1 1 0 0 1-1-1V7.5a1 1 0 0 1 1-1h7"/><path d="M9.5 15l1-3.5L19 3l2.5 2.5L13 14z" fill="currentColor" fill-opacity=".35"/></svg></div>
<div class="ab" style="left:1754px;top:846.9px"><svg width="24" height="24" viewBox="0 0 24 24" fill="none" stroke="currentColor" stroke-width="1.6" stroke-linecap="round" stroke-linejoin="round" style="display:block;"><path d="M11.2 10.4A5.8 5.8 0 1 1 14.1 13.2L12.8 14.5h-2v2h-2v2h-2l-1.3 1.3H3v-2.7z"/></svg></div>
<div class="ab red" style="left:1794px;top:846.9px"><svg width="22" height="22" viewBox="0 0 24 24" fill="none" stroke="currentColor" stroke-width="1.6" stroke-linecap="round" stroke-linejoin="round" style="display:block;"><path d="M4 6.5h16M9.5 3.5h5"/><path d="M6 6.5l.800 13.5a1 1 0 0 0 1 1h8.4a1 1 0 0 0 1-1l.800-13.5z" fill="currentColor" fill-opacity=".38"/><path d="M10 10.5v6.5M14 10.5v6.5" stroke-width="1.3"/></svg></div>
<div class="ab grn" style="left:1834px;top:846.9px"><svg width="23" height="23" viewBox="0 0 24 24" fill="none" stroke="currentColor" stroke-width="2.3" stroke-linecap="round" stroke-linejoin="round" style="display:block;"><path d="M3 21l1.35-5A9 9 0 1 1 8.1 19.66z"/><path d="M8.7 7.5c.4-.7 1.4-.8 1.7-.1l.8 1.7c.1.3.1.6-.1.9l-.6.7c.6 1.3 1.7 2.4 3.1 3.1l.8-.6c.3-.2.6-.2.9-.1l1.6.8c.7.3.6 1.3-.1 1.7-1.4.8-3.5.2-5.6-1.9s-3-4.6-2.5-6.2z" fill="currentColor" stroke="none"/></svg></div>
<div class="t" style="top:910.4px;font-size:12px;letter-spacing:-0.246px;color:#222;left:1482.78px;-webkit-text-stroke:0.2px #222;">Records per page:</div>
<div class="t" style="top:908.4px;font-size:14px;letter-spacing:-1.317px;color:#222;left:1596.1px;-webkit-text-stroke:0.2px #222;">10</div>
<div class="abs" style="left:1622.5px;top:913.047189184564px;width:0;height:0;border-left:5px solid transparent;border-right:5px solid transparent;border-top:5.5px solid #555"></div>
<div class="t" style="top:910.4px;font-size:12px;letter-spacing:-0.131px;color:#222;left:1657.46px;-webkit-text-stroke:0.2px #222;">1-10 of 183</div>
<div class="abs" style="left:1738px;top:903.547189184564px"><svg width="24" height="24" viewBox="0 0 24 24" fill="none" stroke="#8a8a8a" stroke-width="2" stroke-linecap="round" stroke-linejoin="round" ><path d="M7 6.5v11M17 6.5L11.5 12l5.5 5.5"/></svg></div>
<div class="abs" style="left:1772px;top:903.547189184564px"><svg width="24" height="24" viewBox="0 0 24 24" fill="none" stroke="#8a8a8a" stroke-width="2" stroke-linecap="round" stroke-linejoin="round" ><path d="M14.5 6.5L9 12l5.5 5.5"/></svg></div>
<div class="abs" style="left:1805px;top:903.547189184564px"><svg width="24" height="24" viewBox="0 0 24 24" fill="none" stroke="#333" stroke-width="2" stroke-linecap="round" stroke-linejoin="round" ><path d="M9.5 6.5L15 12l-5.5 5.5"/></svg></div>
<div class="abs" style="left:1839px;top:903.547189184564px"><svg width="24" height="24" viewBox="0 0 24 24" fill="none" stroke="#333" stroke-width="2" stroke-linecap="round" stroke-linejoin="round" ><path d="M17 6.5v11M7 6.5L12.5 12 7 17.5"/></svg></div>
<div class="abs" style="left:1746px;top:338.5px;width:47px;height:56.5px;border:3px solid #e2131f"></div>
<svg class="abs" style="left:1743px;top:270px" width="40" height="64" viewBox="0 0 40 64"><path d="M20 7.5V44" stroke="#e2131f" stroke-width="3.2" fill="none"/><path d="M9.8 41h20.4L20 59.5z" fill="#e2131f"/></svg>
<div id="side">
<div class="t" style="top:204.89px;font-size:14.4px;letter-spacing:-0.002px;color:#8c8c8c;left:16.49px;">Main Menu</div>
<div class="abs" style="left:16px;top:248.3px;color:#222"><svg width="24" height="24" viewBox="0 0 24 24" fill="none" stroke="currentColor" stroke-width="1.85" stroke-linecap="round" stroke-linejoin="round" style="display:block;"><path d="M2.8 11.8L12 3.5l9.2 8.3"/><path d="M5.5 10v10h4.5v-6h4v6h4.5V10"/></svg></div>
<div class="t" style="top:253.09px;font-size:14px;letter-spacing:-0.166px;color:#222;left:56.35px;-webkit-text-stroke:0.2px #222;">Dashboard</div>
<div class="abs" style="left:16px;top:296.5px;color:#222"><svg width="24" height="24" viewBox="0 0 24 24" fill="none" stroke="currentColor" stroke-width="1.85" stroke-linecap="round" stroke-linejoin="round" style="display:block;"><circle cx="10" cy="7.8" r="4.2"/><path d="M2.5 20.5c.6-3.8 3.5-6 7.5-6 1 0 1.9.1 2.7.4"/><path d="M13.5 21.2l.4-2.6 5.3-5.3 2.2 2.2-5.3 5.3z" fill="currentColor" stroke-width="1"/></svg></div>
<div class="t" style="top:301.09px;font-size:14px;letter-spacing:-0.064px;color:#222;left:56.35px;-webkit-text-stroke:0.2px #222;">Profile</div>
<div class="t" style="top:350.98px;font-size:14.4px;letter-spacing:0.052px;color:#8c8c8c;left:16.49px;">Management</div>
<div class="abs" style="left:16px;top:393.4px;color:#222"><svg width="24" height="24" viewBox="0 0 24 24" fill="none" stroke="currentColor" stroke-width="1.85" stroke-linecap="round" stroke-linejoin="round" style="display:block;"><path d="M12 8v12.5M2.8 7h6.2a3 3 0 0 1 3 1.5 3 3 0 0 1 3-1.5h6.2v12h-6.2a3 3 0 0 0-3 1.5 3 3 0 0 0-3-1.5H2.8z"/><path d="M12 5.5v2.5"/></svg></div>
<div class="t" style="top:397.09px;font-size:14px;letter-spacing:-0.046px;color:#222;left:56.35px;-webkit-text-stroke:0.2px #222;">Programs</div>
<div class="abs" style="left:261.5px;top:396.4px;color:#3a3a3a"><svg width="19" height="19" viewBox="0 0 24 24" fill="none" stroke="currentColor" stroke-width="2.5" stroke-linecap="round" stroke-linejoin="round" style="display:block;"><path d="M6 9.5l6 6 6-6"/></svg></div>
<div class="abs" style="left:16px;top:441.4px;color:#222"><svg width="24" height="24" viewBox="0 0 24 24" fill="none" stroke="currentColor" stroke-width="1.85" stroke-linecap="round" stroke-linejoin="round" style="display:block;"><path d="M7.5 10.5V9a4.5 4.5 0 0 1 9 0v1.5" fill="currentColor" fill-opacity=".35"/><rect x="3.5" y="10.5" width="17" height="3.6" rx="1" fill="currentColor" fill-opacity=".8"/><path d="M5.5 14.5v2.5M18.5 14.5v2.5"/><rect x="3.5" y="17" width="17" height="3.6" rx="1" fill="currentColor" fill-opacity=".8"/><path d="M8 15.5h8" stroke-width="1.2" stroke-opacity=".6"/></svg></div>
<div class="t" style="top:447.18px;font-size:14px;letter-spacing:-0.144px;color:#222;left:56.35px;-webkit-text-stroke:0.2px #222;">Trainers</div>
<div class="abs" style="left:16px;top:489.6px;color:#2a7fdb"><svg width="24" height="24" viewBox="0 0 24 24" fill="none" stroke="currentColor" stroke-width="1.85" stroke-linecap="round" stroke-linejoin="round" style="display:block;"><circle cx="7.3" cy="8.3" r="3.8"/><circle cx="16.7" cy="8.3" r="3.8"/><path d="M2 20c.3-3.8 2.4-6 5.3-6s4.6 2.2 4.7 5.5c.1-3.3 1.8-5.5 4.7-5.5s5 2.2 5.3 6"/></svg></div>
<div class="t" style="top:495.18px;font-size:14px;letter-spacing:-0.065px;color:#2a7fdb;left:56.35px;-webkit-text-stroke:0.2px #2a7fdb;">Parents</div>
<div class="abs" style="left:16px;top:537.6px;color:#222"><svg width="24" height="24" viewBox="0 0 24 24" fill="none" stroke="currentColor" stroke-width="1.85" stroke-linecap="round" stroke-linejoin="round" style="display:block;"><circle cx="12" cy="8" r="3" fill="currentColor"/><circle cx="5.5" cy="11" r="2.4" fill="currentColor"/><circle cx="18.5" cy="11" r="2.4" fill="currentColor"/><path d="M6.5 20c.5-3.8 2.6-6 5.5-6s5 2.2 5.5 6z" fill="currentColor"/><path d="M1.8 19.5c.3-2.8 1.7-4.5 3.7-4.5M22.2 19.5c-.3-2.8-1.7-4.5-3.7-4.5" stroke-width="2.2"/></svg></div>
<div class="t" style="top:543.18px;font-size:14px;letter-spacing:-0.099px;color:#222;left:56.35px;-webkit-text-stroke:0.2px #222;">Students</div>
<div class="abs" style="left:16px;top:585.6px;color:#222"><svg width="24" height="24" viewBox="0 0 24 24" fill="none" stroke="currentColor" stroke-width="1.85" stroke-linecap="round" stroke-linejoin="round" style="display:block;"><path d="M4.5 2.5h9.5l5.5 5.5v13.5h-15z"/><path d="M13.5 2.5v6h6"/><path d="M8 12.5h8v6H8zM8 15.5h8M11 12.5v6" stroke-width="1.3"/></svg></div>
<div class="t" style="top:591.18px;font-size:14px;letter-spacing:0.092px;color:#222;left:56.35px;-webkit-text-stroke:0.2px #222;">Applications</div>
<div class="t" style="top:638.98px;font-size:14.4px;letter-spacing:0.111px;color:#8c8c8c;left:16.49px;">Miscellaneous</div>
<div class="abs" style="left:16px;top:682.2px;color:#222"><svg width="24" height="24" viewBox="0 0 24 24" fill="none" stroke="currentColor" stroke-width="1.85" stroke-linecap="round" stroke-linejoin="round" style="display:block;"><path d="M11.5 21H4V3h9.5l5 5v3.5"/><path d="M13 3.5V8.5h5"/><path d="M7 12.5h5M7 15.5h4M7 18h3" stroke-width="1.3"/><path d="M21 15c-.4-.8-1.2-1.2-2.3-1.2-1.3 0-2.2.7-2.2 1.7 0 2.3 4.7 1 4.7 3.4 0 1.1-1 1.8-2.4 1.8-1.2 0-2.1-.5-2.5-1.4M18.7 12.3v9.9" stroke-width="1.5"/></svg></div>
<div class="t" style="top:687.18px;font-size:14px;letter-spacing:0.212px;color:#222;left:56.35px;-webkit-text-stroke:0.2px #222;">Billings</div>
<div class="abs" style="left:261.5px;top:685.2px;color:#3a3a3a"><svg width="19" height="19" viewBox="0 0 24 24" fill="none" stroke="currentColor" stroke-width="2.5" stroke-linecap="round" stroke-linejoin="round" style="display:block;"><path d="M6 9.5l6 6 6-6"/></svg></div>
<div class="abs" style="left:16px;top:730.2px;color:#222"><svg width="24" height="24" viewBox="0 0 24 24" fill="none" stroke="currentColor" stroke-width="1.85" stroke-linecap="round" stroke-linejoin="round" style="display:block;"><rect x="4" y="4.5" width="16" height="11.5" rx="1" stroke-width="2.2"/><path d="M2 19.5h20" stroke-width="2.2"/><path d="M7.5 11.5c1.5-3 3-3 4.5-.5s3 2 4.5-1" stroke-width="1.5"/></svg></div>
<div class="t" style="top:735.18px;font-size:14px;letter-spacing:0.037px;color:#222;left:56.35px;-webkit-text-stroke:0.2px #222;">Reports</div>
<div class="abs" style="left:261.5px;top:733.2px;color:#3a3a3a"><svg width="19" height="19" viewBox="0 0 24 24" fill="none" stroke="currentColor" stroke-width="2.5" stroke-linecap="round" stroke-linejoin="round" style="display:block;"><path d="M6 9.5l6 6 6-6"/></svg></div>
<div class="abs" style="left:16px;top:778.2px;color:#222"><svg width="24" height="24" viewBox="0 0 24 24" fill="none" stroke="currentColor" stroke-width="1.85" stroke-linecap="round" stroke-linejoin="round" style="display:block;"><circle cx="12" cy="12" r="3.3"/><path d="M9.65 2.59L14.35 2.59L14.38 5.1L16.79 6.49L18.98 5.26L21.32 9.33L19.17 10.61L19.17 13.39L21.32 14.67L18.98 18.74L16.79 17.51L14.38 18.9L14.35 21.41L9.65 21.41L9.62 18.9L7.21 17.51L5.02 18.74L2.68 14.67L4.83 13.39L4.83 10.61L2.68 9.33L5.02 5.26L7.21 6.49L9.62 5.1z"/></svg></div>
<div class="t" style="top:783.18px;font-size:14px;letter-spacing:0.152px;color:#222;left:56.35px;-webkit-text-stroke:0.2px #222;">Settings</div>
<div class="abs" style="left:261.5px;top:781.2px;color:#3a3a3a"><svg width="19" height="19" viewBox="0 0 24 24" fill="none" stroke="currentColor" stroke-width="2.5" stroke-linecap="round" stroke-linejoin="round" style="display:block;"><path d="M6 9.5l6 6 6-6"/></svg></div>
<div class="abs" style="left:16px;top:826.2px;color:#222"><svg width="24" height="24" viewBox="0 0 24 24" fill="none" stroke="currentColor" stroke-width="1.85" stroke-linecap="round" stroke-linejoin="round" style="display:block;"><path d="M5 17.5A8.7 8.7 0 1 1 19 17.5"/><rect x="3.6" y="12.5" width="4" height="6.5" rx="1.5" fill="currentColor" stroke-width="1"/><rect x="16.4" y="12.5" width="4" height="6.5" rx="1.5" fill="currentColor" stroke-width="1"/><path d="M18.5 19c0 1.8-1.5 2.5-3 2.5H12.5"/></svg></div>
<div class="t" style="top:831.18px;font-size:14px;letter-spacing:0.123px;color:#222;left:56.35px;-webkit-text-stroke:0.2px #222;">Support</div>
<div class="abs" style="left:261.5px;top:829.2px;color:#3a3a3a"><svg width="19" height="19" viewBox="0 0 24 24" fill="none" stroke="currentColor" stroke-width="2.5" stroke-linecap="round" stroke-linejoin="round" style="display:block;"><path d="M6 9.5l6 6 6-6"/></svg></div>
<div class="abs" style="left:0;top:0"><span class="t lg" style="z-index:1;left:38px;top:39.4px;font-size:79px;color:#1f1f21;-webkit-text-stroke:2.6px #1f1f21;transform:scaleX(.93);transform-origin:0 0">y</span><span class="t lg" style="z-index:3;left:74.5px;top:67.9px;font-size:64.5px;letter-spacing:-.3px;color:#1f1f21;-webkit-text-stroke:2.2px #1f1f21;transform:scaleY(1.135);transform-origin:0 84.65%">uran</span><span class="t lg" style="z-index:3;left:209.5px;top:93.2px;font-size:34.6px;letter-spacing:-.4px;color:#1f1f21;-webkit-text-stroke:.9px #1f1f21">.my</span></div>
<div class="abs" style="z-index:2;left:55px;top:56px;width:34px;height:30px;background:#fff;transform:skewX(-12deg)"></div>
<div class="abs" style="z-index:2;left:58px;top:62.8px;width:29px;height:9.2px;background:#29b6f6;border-radius:9px 0 0 0;transform:skewX(-12deg)"></div>
<div class="abs" style="z-index:2;left:57px;top:72px;width:27px;height:4.6px;background:#1e88e5;transform:skewX(-12deg)"></div>
<div class="abs" style="z-index:2;left:56px;top:76.6px;width:25.5px;height:6.6px;background:#2a3a9b;transform:skewX(-12deg)"></div>
<div class="abs" style="z-index:2;left:84.7px;top:57px;width:10px;height:9px;background:#29b6f6"></div>
<div class="abs" style="z-index:2;left:96px;top:61px;width:6px;height:5px;background:#2a3a9b"></div>
<div class="abs" style="z-index:2;left:87.6px;top:67.8px;width:6.3px;height:6.1px;background:#2a3a9b"></div>
</div>
</div>
</body></html>
